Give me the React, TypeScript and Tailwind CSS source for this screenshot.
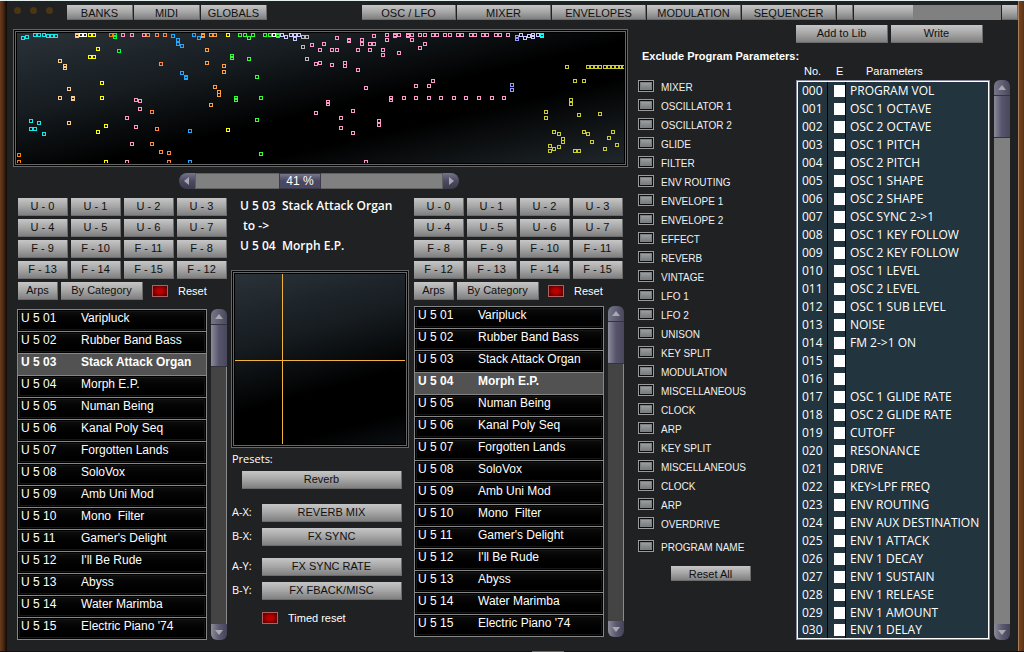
import clsx from 'clsx'

type Point = [number, number]

type Series = {
  color: string
  points: Point[]
}

type Program = {
  code: string
  name: string
}

const SERIES: Series[] = [
  {
    color: '#18e8e8',
    points: [[4, 3], [8, 2], [16, 0], [20, 0], [25, 0], [29, 1], [33, 1], [37, 1], [12, 86], [20, 88], [12, 94], [16, 94], [25, 99]],
  },
  { color: '#ff8000', points: [[0, 120], [0, 127], [92, 0]] },
  {
    color: '#ffcc88',
    points: [[58, 0], [58, 1], [41, 26], [46, 31], [46, 33], [50, 54], [41, 63], [54, 63], [54, 64], [50, 88]],
  },
  { color: '#ffffff', points: [[62, 0], [66, 0], [255, 0]] },
  {
    color: '#ffff00',
    points: [[71, 0], [75, 0], [79, 14], [71, 22], [75, 22], [83, 48], [83, 63], [87, 91], [79, 97], [87, 127], [209, 0], [209, 95]],
  },
  { color: '#00ff44', points: [[96, 0], [96, 2], [100, 16]] },
  {
    color: '#ff99bb',
    points: [[104, 0], [113, 0], [125, 0], [117, 65], [121, 66], [121, 74], [108, 83], [117, 92], [113, 109], [108, 127]],
  },
  {
    color: '#ff8844',
    points: [[129, 0], [138, 0], [146, 0], [142, 29], [133, 77], [138, 94], [133, 109], [142, 117], [150, 118], [150, 127]],
  },
  {
    color: '#22aaff',
    points: [[154, 1], [159, 5], [159, 9], [163, 11], [163, 38], [167, 42], [167, 43], [171, 96], [171, 127], [175, 0], [180, 3]],
  },
  {
    color: '#ffa040',
    points: [[184, 0], [184, 1], [192, 0], [196, 0], [188, 15], [188, 28], [205, 31], [205, 37], [196, 52], [200, 57], [200, 60], [192, 70]],
  },
  {
    color: '#33ff33',
    points: [[221, 0], [226, 0], [230, 3], [234, 0], [246, 0], [251, 0], [259, 0], [259, 1], [213, 21], [213, 23], [230, 24], [238, 42], [217, 63], [217, 65], [242, 63], [238, 85], [242, 119]],
  },
  {
    color: '#ccccff',
    points: [[263, 0], [267, 2], [272, 0], [276, 0], [276, 4], [280, 0], [502, 0], [506, 3], [510, 1], [514, 0], [514, 2], [519, 0]],
  },
  { color: '#bbbbbb', points: [[284, 2], [288, 2], [284, 12], [288, 24]] },
  {
    color: '#ff99cc',
    points: [
      [293, 10], [305, 9], [301, 15], [313, 15], [318, 15], [318, 3], [297, 29], [301, 28], [313, 30], [309, 67], [309, 69], [297, 78],
      [330, 5], [330, 6], [326, 28], [326, 31], [322, 83], [322, 93], [334, 76], [334, 98], [339, 15], [339, 35], [343, 5], [343, 9],
      [347, 53], [347, 127], [351, 9], [355, 9], [351, 15], [355, 1], [360, 86], [360, 90], [364, 15], [364, 20], [368, 0], [368, 5],
      [372, 63], [372, 65], [376, 0], [376, 1], [380, 0], [380, 18], [385, 63], [389, 0], [389, 1], [393, 0], [393, 5], [397, 51],
      [397, 63], [401, 0], [401, 13], [406, 0], [406, 9], [410, 51], [410, 63], [414, 0], [418, 0], [414, 46], [422, 63], [426, 0],
      [431, 0], [435, 63], [439, 0], [443, 0], [447, 63], [452, 0], [456, 0], [460, 63], [464, 0], [468, 0], [473, 63], [477, 0],
      [481, 0], [485, 63], [489, 0],
    ],
  },
  { color: '#9999ff', points: [[498, 2], [498, 4], [493, 50], [493, 55]] },
  {
    color: '#cccc33',
    points: [
      [548, 32], [569, 32], [573, 32], [577, 32], [581, 32], [586, 32], [590, 32], [594, 32], [598, 32], [602, 32], [604, 32], [556, 46],
      [565, 46], [552, 65], [552, 69], [527, 77], [527, 83], [560, 80], [581, 79], [535, 97], [540, 99], [544, 104], [544, 107],
      [531, 111], [531, 116], [535, 114], [540, 112], [556, 116], [560, 116], [565, 97], [569, 99], [573, 107], [586, 114],
      [590, 103], [594, 97], [598, 110],
    ],
  },
  { color: '#00ffff', points: [[523, 0], [523, 1]] },
]

const PROGRAMS: Program[] = [
  'Varipluck', 'Rubber Band Bass', 'Stack Attack Organ', 'Morph E.P.', 'Numan Being', 'Kanal Poly Seq', 'Forgotten Lands', 'SoloVox',
  'Amb Uni Mod', 'Mono  Filter', "Gamer's Delight", "I'll Be Rude", 'Abyss', 'Water Marimba', "Electric Piano '74",
].map((name, i) => ({ code: `U 5 ${String(i + 1).padStart(2, '0')}`, name }))

const BANKS_A = ['U - 0', 'U - 1', 'U - 2', 'U - 3', 'U - 4', 'U - 5', 'U - 6', 'U - 7', 'F - 9', 'F - 10', 'F - 11', 'F - 8', 'F - 13', 'F - 14', 'F - 15', 'F - 12']
const BANKS_B = ['U - 0', 'U - 1', 'U - 2', 'U - 3', 'U - 4', 'U - 5', 'U - 6', 'U - 7', 'F - 8', 'F - 9', 'F - 10', 'F - 11', 'F - 12', 'F - 13', 'F - 14', 'F - 15']

const EXCLUDES = [
  'MIXER', 'OSCILLATOR 1', 'OSCILLATOR 2', 'GLIDE', 'FILTER', 'ENV ROUTING', 'ENVELOPE 1', 'ENVELOPE 2', 'EFFECT', 'REVERB', 'VINTAGE',
  'LFO 1', 'LFO 2', 'UNISON', 'KEY SPLIT', 'MODULATION', 'MISCELLANEOUS', 'CLOCK', 'ARP', 'KEY SPLIT', 'MISCELLANEOUS', 'CLOCK', 'ARP',
  'OVERDRIVE',
]

const PARAMETERS = [
  'PROGRAM VOL', 'OSC 1 OCTAVE', 'OSC 2 OCTAVE', 'OSC 1 PITCH', 'OSC 2 PITCH', 'OSC 1 SHAPE', 'OSC 2 SHAPE', 'OSC SYNC 2->1',
  'OSC 1 KEY FOLLOW', 'OSC 2 KEY FOLLOW', 'OSC 1 LEVEL', 'OSC 2 LEVEL', 'OSC 1 SUB LEVEL', 'NOISE', 'FM 2->1 ON', '', '',
  'OSC 1 GLIDE RATE', 'OSC 2 GLIDE RATE', 'CUTOFF', 'RESONANCE', 'DRIVE', 'KEY>LPF FREQ', 'ENV ROUTING', 'ENV AUX DESTINATION',
  'ENV 1 ATTACK', 'ENV 1 DECAY', 'ENV 1 SUSTAIN', 'ENV 1 RELEASE', 'ENV 1 AMOUNT', 'ENV 1 DELAY',
]

function MetalButton({ label, className }: { label?: string; className?: string }) {
  return (
    <button
      type="button"
      aria-label={label ? undefined : 'Blank tab'}
      className={clsx(
        'flex shrink-0 items-start justify-center overflow-hidden whitespace-nowrap border-r border-b border-[#6c6c6c] bg-linear-to-b from-[#c6c6c6] via-[#a6a6a6] to-[#808080] text-[11px] leading-4 text-[#101010]',
        className,
      )}
    >
      {label}
    </button>
  )
}

function Led({ label }: { label: string }) {
  return (
    <label className="flex items-center gap-[10px] text-[11px] leading-4 text-white">
      <input
        type="checkbox"
        className="h-3 w-4 appearance-none border border-[#b06060] bg-radial from-[#b80000] from-30% to-[#4c0000]"
      />
      {label}
    </label>
  )
}

function Arrow({ direction }: { direction: 'up' | 'down' | 'left' | 'right' }) {
  const shapes = {
    up: 'M4 10L8 5L12 10z',
    down: 'M4 6L8 11L12 6z',
    left: 'M10 4L5 8L10 12z',
    right: 'M6 4L11 8L6 12z',
  }
  return (
    <svg viewBox="0 0 16 16" className="size-4" fill="#a8a8b2">
      <path d={shapes[direction]} />
    </svg>
  )
}

function VerticalScroll({ light }: { light?: boolean }) {
  return (
    <div className="flex w-4 shrink-0 flex-col">
      <button type="button" aria-label="Scroll up" className="h-4 rounded-t-md border-b border-[#34343e] bg-linear-to-r from-[#77778a] to-[#4a475c]">
        <Arrow direction="up" />
      </button>
      <div className={clsx('flex-1', light ? 'bg-[#808080]' : 'border-r border-[#8a8a8a] bg-[#444444]')}>
        <div className={clsx('h-[42px] border-b border-[#33333c] bg-linear-to-r from-[#8c8c9a] via-[#56546c] to-[#4a475c]', !light && '-mr-px')} />
      </div>
      <button type="button" aria-label="Scroll down" className="h-4 rounded-b-md bg-linear-to-r from-[#8c8c98] via-[#5c5a70] to-[#45435a]">
        <Arrow direction="down" />
      </button>
    </div>
  )
}

function ProgramList({ selected }: { selected: string }) {
  return (
    <div className="flex gap-1">
      <ul className="flex-1 border border-b-0 border-[#868686] text-xs text-white">
        {PROGRAMS.map((program) => {
          const active = program.code === selected
          return (
            <li key={program.code} className="border-b border-[#868686]">
              <button
                type="button"
                className={clsx(
                  'flex h-[21px] w-full items-start pl-[3px] text-left leading-4 whitespace-pre',
                  active ? 'bg-[#525252] font-bold' : 'bg-linear-to-b from-[#101010] to-black shadow-[inset_0_0_0_1px_#000,inset_0_0_0_2px_#161616]',
                )}
              >
                <span className="w-[60px]">{program.code}</span>
                <span>{program.name}</span>
              </button>
            </li>
          )
        })}
      </ul>
      <VerticalScroll />
    </div>
  )
}

type BankProps = {
  banks: string[]
  selected: string
  className: string
}

function Bank({ banks, selected, className }: BankProps) {
  return (
    <section className={clsx('flex w-[210px] shrink-0 flex-col', className)}>
      <div className="grid grid-cols-4 gap-[3px]">
        {banks.map((bank) => (
          <MetalButton key={bank} label={bank} className="h-[18px]" />
        ))}
      </div>
      <div className="mt-[3px] flex gap-[3px]">
        <MetalButton label="Arps" className="h-[18px] w-10" />
        <MetalButton label="By Category" className="mr-[6px] h-[18px] w-[82px]" />
        <Led label="Reset" />
      </div>
      <ProgramList selected={selected} />
    </section>
  )
}

function ProgramMap() {
  return (
    <div className="border-3 border-double border-[#666666] bg-black p-px">
      <svg
        viewBox="0 0 607 130"
        preserveAspectRatio="none"
        className="block h-[130px] w-full bg-[linear-gradient(167deg,#2a3239_0%,#161c20_30%,#000_55%,#000_68%,#20272b_100%)]"
        shapeRendering="crispEdges"
        fill="none"
      >
        {SERIES.map((series) => (
          <path
            key={series.color}
            stroke={series.color}
            d={series.points.map(([x, y]) => `M${x + 0.5} ${y + 0.5}h3v3h-3z`).join('')}
          />
        ))}
      </svg>
    </div>
  )
}

function MorphSlider() {
  return (
    <div className="mx-auto mt-[6px] flex h-4 w-[283px] pr-[3px] text-xs text-white">
      <button type="button" aria-label="Decrease" className="w-4 rounded-l-lg bg-linear-to-b from-[#74748a] via-[#4c4a60] to-[#3c3a4c]">
        <Arrow direction="left" />
      </button>
      <div className="flex flex-1 border border-[#606060] bg-[#808080] pl-[83px]">
        <div className="-my-px w-[42px] border border-[#3c3a4a] bg-linear-to-b from-[#77758c] via-[#4a4860] to-[#4a4860] text-center leading-[14px]">41 %</div>
      </div>
      <button type="button" aria-label="Increase" className="w-4 rounded-r-lg bg-linear-to-b from-[#74748a] via-[#4c4a60] to-[#3c3a4c]">
        <Arrow direction="right" />
      </button>
    </div>
  )
}

function PresetRow({ axis, label }: { axis: string; label: string }) {
  return (
    <div className="flex items-start">
      <span className="w-[30px] font-['Open_Sans','Noto_Sans',sans-serif] text-[11px] leading-4 text-white">{axis}:</span>
      <MetalButton label={label} className="h-[18px] w-[140px]" />
    </div>
  )
}

function MorphPanel() {
  return (
    <section className="flex min-w-0 flex-1 flex-col">
      <div className="h-[72px] pl-[9px] font-['Open_Sans','Noto_Sans',sans-serif] text-xs leading-5 font-semibold whitespace-pre text-white">
        <div className="-mt-[2px]">U 5 03  Stack Attack Organ</div>
        <div> to -&gt;</div>
        <div>U 5 04  Morph E.P.</div>
      </div>
      <div className="border-3 border-double border-[#666666] bg-black p-px">
        <svg
          viewBox="0 0 170 170"
          className="block w-full bg-[linear-gradient(165deg,#2a3239_0%,#161c20_35%,#000_65%,#000_85%,#0c1013_100%)]"
          shapeRendering="crispEdges"
          stroke="#f2b33c"
        >
          <path d="M47.5 0V170M0 86.5H170" />
        </svg>
      </div>
      <div className="mt-[3px] h-5 pl-px font-['Open_Sans','Noto_Sans',sans-serif] text-[11px] leading-4 text-white">Presets:</div>
      <MetalButton label="Reverb" className="ml-[11px] h-[18px] w-40" />
      <div className="mt-[15px] flex flex-col gap-[6px] pl-px">
        <PresetRow axis="A-X" label="REVERB MIX" />
        <PresetRow axis="B-X" label="FX SYNC" />
      </div>
      <div className="mt-3 flex flex-col gap-[6px] pl-px">
        <PresetRow axis="A-Y" label="FX SYNC RATE" />
        <PresetRow axis="B-Y" label="FX FBACK/MISC" />
      </div>
      <div className="mt-[10px] pl-[31px]">
        <Led label="Timed reset" />
      </div>
    </section>
  )
}

function ExcludeItem({ label }: { label: string }) {
  return (
    <label className="flex h-[19px] items-start gap-[7px] text-[10px] leading-4 text-[#f0f0f0]">
      <input
        type="checkbox"
        className="h-3 w-4 appearance-none border border-[#9a9a9a] bg-linear-to-b from-[#a4a9ab] to-[#6e7476] shadow-[inset_0_0_0_1px_#0c0c0c,inset_0_0_0_2px_#7c8082] checked:from-[#b80000] checked:to-[#4c0000]"
      />
      {label}
    </label>
  )
}

function ParameterTable() {
  return (
    <div className="flex gap-1">
      <div className="flex-1 border border-[#8c8aa0]">
        <div className="border border-white bg-[#22343d]">
          <table className="w-full table-fixed border-separate border-spacing-0 font-['Open_Sans','Noto_Sans',sans-serif] text-xs leading-4 text-white">
            <tbody>
              {PARAMETERS.map((name, i) => {
                const number = String(i).padStart(3, '0')
                return (
                  <tr key={number} className="h-[18px] last:h-4">
                    <td className="w-[30px] border-r border-black p-0 pl-1">{number}</td>
                    <td className="w-[18px] border-r border-black p-0 pl-[6px]">
                      <input type="checkbox" aria-label={`Exclude ${number}`} className="block h-3 w-[11px] appearance-none bg-white checked:bg-[#404040]" />
                    </td>
                    <td className="p-0 pl-1 whitespace-nowrap">{name}</td>
                  </tr>
                )
              })}
            </tbody>
          </table>
        </div>
      </div>
      <VerticalScroll light />
    </div>
  )
}

function TopTabs() {
  return (
    <nav className="mt-1 flex h-[15px] pl-[7px]">
      <div className="flex items-center gap-[9px] pr-[14px] pb-1">
        <span className="size-[7px] rounded-full bg-[#4c3512]" />
        <span className="size-[7px] rounded-full bg-[#4c3512]" />
        <span className="size-[7px] rounded-full bg-[#4c3512]" />
      </div>
      <div className="flex gap-px">
        {['BANKS', 'MIDI', 'GLOBALS'].map((tab) => (
          <MetalButton key={tab} label={tab} className="w-[66px]" />
        ))}
      </div>
      <div className="ml-[95px] flex flex-1 gap-px">
        {['OSC / LFO', 'MIXER', 'ENVELOPES', 'MODULATION', 'SEQUENCER'].map((tab) => (
          <MetalButton key={tab} label={tab} className="w-[94px]" />
        ))}
        <MetalButton className="w-4" />
        <div className="flex flex-1">
          <div className="w-[59px] bg-linear-to-b from-[#c6c6c6] via-[#a6a6a6] to-[#808080]" />
          <div className="flex-1 bg-[#808080]" />
        </div>
        <MetalButton className="w-4" />
      </div>
    </nav>
  )
}

export default function App() {
  return (
    <div className="flex min-h-screen flex-col border-t border-[#e4f0ee] bg-[#1f2123] font-['Liberation_Sans',Arial,sans-serif]">
      <div className="flex flex-1">
        <div className="w-[7px] shrink-0 bg-linear-to-r from-[#6a3c1e] via-[#4a2610] to-[#0c0806]" />
        <div className="min-w-0 flex-1">
          <TopTabs />
          <main className="flex pr-2 pl-[6px]">
            <div className="min-w-0 flex-1 pt-[9px]">
              <ProgramMap />
              <MorphSlider />
              <div className="mt-[9px] flex pr-1 pl-1">
                <Bank banks={BANKS_A} selected="U 5 03" className="mr-1 gap-[9px] [&>:first-child]:ml-px [&>:nth-child(2)]:-mt-[6px] [&>:nth-child(2)]:ml-px" />
                <MorphPanel />
                <Bank banks={BANKS_B} selected="U 5 04" className="ml-[5px] gap-[6px] [&>:nth-child(2)]:-mt-[3px] [&>:first-child]:mr-px" />
              </div>
            </div>
            <section className="ml-[10px] w-[158px] shrink-0 pt-7">
              <h2 className="mb-4 pl-1 text-[11px] leading-4 font-bold whitespace-nowrap text-white">Exclude Program Parameters:</h2>
              {EXCLUDES.map((label, i) => (
                <ExcludeItem key={i} label={label} />
              ))}
              <div className="mt-1">
                <ExcludeItem label="PROGRAM NAME" />
              </div>
              <MetalButton label="Reset All" className="mt-[7px] ml-[33px] h-[15px] w-20" />
            </section>
            <section className="w-[214px] shrink-0 pt-[5px]">
              <div className="flex gap-[3px]">
                <MetalButton label="Add to Lib" className="h-[18px] w-[92px]" />
                <MetalButton label="Write" className="h-[18px] w-[92px]" />
              </div>
              <div className="mt-5 flex h-[17px] pl-2 text-[11px] leading-4 text-white">
                <span className="w-8">No.</span>
                <span className="w-[30px]">E</span>
                <span>Parameters</span>
              </div>
              <ParameterTable />
            </section>
          </main>
        </div>
        <div className="w-[6px] shrink-0 border-l border-[#a8805c] bg-linear-to-r from-[#74441f] to-[#5c3216]" />
      </div>
      <footer className="h-px bg-[#111213]">
        <div className="ml-[52%] h-px w-8 bg-[#6a6a6a]" />
      </footer>
    </div>
  )
}
